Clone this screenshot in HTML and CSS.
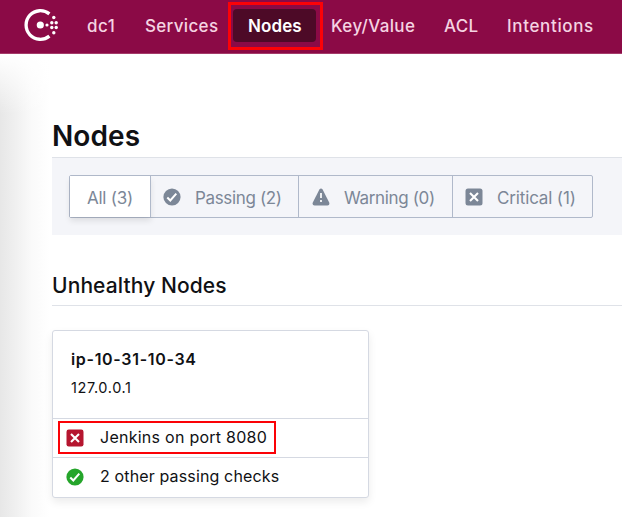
FILE: index.html
```
<!DOCTYPE html>
<html lang="en">
<head>
<meta charset="utf-8">
<title>Nodes</title>
<link rel="stylesheet" href="styles.css">
</head>
<body>
<header class="topbar">
  <svg class="logo" viewBox="0 0 36 36" fill="#fff">
    <path d="M25.4 5.9A14.3 14.3 0 1 0 25.4 28.1" fill="none" stroke="#fff" stroke-width="3.3"/>
    <circle cx="16.3" cy="17" r="3.6"/>
    <circle cx="23" cy="17" r="1.6"/>
    <circle cx="27.8" cy="14.7" r="1.7"/><circle cx="27.8" cy="19.5" r="1.7"/>
    <circle cx="32.2" cy="14.7" r="1.7"/><circle cx="32.2" cy="19.5" r="1.7"/>
    <circle cx="29.8" cy="9.5" r="1.7"/><circle cx="29.8" cy="24.8" r="1.7"/>
  </svg>
  <nav class="menu">
    <a class="link dc">dc1</a>
    <a class="link services">Services</a>
    <a class="link active">Nodes<span class="mark"></span></a>
    <a class="link kv">Key/Value</a>
    <a class="link acl">ACL</a>
    <a class="link intentions">Intentions</a>
  </nav>
</header>
<main class="page">
  <h1 class="title">Nodes</h1>
  <div class="toolbar">
    <div class="filters">
      <div class="filter all"><span>All (3)</span></div>
      <div class="filter passing">
        <svg class="icon" viewBox="0 0 18 18"><circle cx="9" cy="9" r="8.6" fill="#7c8797"/><path d="M4.3 9.5l3 3 6-6.8" fill="none" stroke="#fff" stroke-width="2"/></svg>
        <span>Passing (2)</span>
      </div>
      <div class="filter warning">
        <svg class="icon" viewBox="0 0 18 18"><path d="M7.4 1.5Q9 -.6 10.6 1.5L17.2 14.5Q18 17.2 15.5 17.4H2.5Q0 17.2 .8 14.5Z" fill="#7c8797"/><path d="M9 5v5M9 12v2" stroke="#fff" stroke-width="1.7"/></svg>
        <span>Warning (0)</span>
      </div>
      <div class="filter critical">
        <svg class="icon" viewBox="0 0 18 18"><rect x=".5" y=".5" width="17" height="17" rx="2.5" fill="#7c8797"/><path d="M5 5l8 8M13 5l-8 8" stroke="#fff" stroke-width="2.1"/></svg>
        <span>Critical (1)</span>
      </div>
    </div>
  </div>
  <h2 class="subtitle">Unhealthy Nodes</h2>
  <article class="card">
    <div class="head">
      <strong class="name">ip-10-31-10-34</strong>
      <span class="address">127.0.0.1</span>
    </div>
    <div class="check failing">
      <svg class="icon" viewBox="0 0 18 18"><rect x=".5" y=".5" width="17" height="17" rx="2.2" fill="#b5152f"/><path d="M5 5l8 8M13 5l-8 8" stroke="#fff" stroke-width="2.1"/></svg>
      <span class="label">Jenkins on port 8080</span>
      <span class="mark"></span>
    </div>
    <div class="check healthy">
      <svg class="icon" viewBox="0 0 18 18"><circle cx="9" cy="9" r="8.6" fill="#25a52b"/><path d="M4.3 9.5l3 3 6-6.8" fill="none" stroke="#fff" stroke-width="2"/></svg>
      <span class="label">2 other passing checks</span>
    </div>
  </article>
</main>
</body>
</html>
```
FILE: styles.css
```
* { box-sizing: border-box; }
body {
  margin: 0;
  height: 517px;
  overflow: hidden;
  background: #fff;
  font-family: Inter, "Liberation Sans", sans-serif;
  color: #101114;
}
.topbar {
  display: flex;
  align-items: flex-start;
  height: 54px;
  padding: 8px 0 0 24px;
  background: #8b0a46;
  border-bottom: 1px solid #a43b69;
}
.logo { width: 36px; height: 36px; flex: none; }
.menu { display: flex; margin: 1px 0 0 12px; }
.link {
  position: relative;
  flex: none;
  padding: 0 15px;
  height: 33px;
  font-size: 17px;
  line-height: 34px;
  font-weight: 500;
  letter-spacing: .5px;
  white-space: nowrap;
  color: #f5d3e2;
}
.dc { width: 58px; }
.services { width: 103px; letter-spacing: .32px; }
.active { width: 83px; background: #4d0a27; color: #fff; border-radius: 4px; font-weight: 600; letter-spacing: .1px; }
.kv { width: 113px; letter-spacing: .35px; }
.acl { width: 63px; letter-spacing: .3px; }
.intentions { letter-spacing: .65px; }
.mark { position: absolute; border: 2px solid #fb0207; }
.active .mark { inset: -7px -7px -8px -5px; border-width: 3px; }
.page {
  height: 463px;
  padding: 66px 0 0 52px;
  background:
    linear-gradient(#fff, #fff0 60px),
    linear-gradient(90deg, #e7e7e7, #f0f0f0 16px, #fafafa 32px, #fff 50px);
}
.title { margin: 0; height: 37px; font-size: 28px; line-height: 33px; font-weight: 600; letter-spacing: .1px; }
.toolbar { height: 78px; padding: 17px 0 0 17px; background: #f4f5f9; border-top: 1px solid #dfe2e8; }
.filters { display: flex; width: 524px; height: 43px; border: 1px solid #b0b9ca; border-radius: 2px; }
.filter {
  display: flex;
  align-items: center;
  padding: 2px 0 0 12px;
  border-right: 1px solid #b0b9ca;
  font-size: 17px;
  letter-spacing: -.35px;
  white-space: nowrap;
  color: #7c8797;
}
.filter:last-child { border-right: 0; }
.icon { width: 18px; height: 18px; flex: none; }
.filter .icon { margin: -2px 14px 0 0; }
.all { width: 81px; padding-left: 17px; letter-spacing: -.25px; background: #fff; box-shadow: 0 4px 6px #00000018; }
.passing { width: 148px; }
.warning { width: 154px; padding-left: 13px; }
.critical { width: 139px; letter-spacing: -.15px; }
.subtitle { margin: 33px 0 24px; height: 38px; border-bottom: 1px solid #dfe2e8; font-size: 21px; line-height: 35px; font-weight: 550; letter-spacing: .1px; }
.card { width: 317px; height: 168px; border: 1px solid #d5d9e2; border-radius: 3px; background: #fff; box-shadow: 0 4px 8px #00000014; }
.head { display: flex; flex-direction: column; height: 87px; padding: 17px 18px 0; }
.name { font-size: 16px; line-height: 22px; font-weight: 600; letter-spacing: .68px; }
.address { margin-top: 7px; font-size: 14.5px; line-height: 22px; letter-spacing: .6px; }
.check {
  position: relative;
  display: flex;
  align-items: center;
  height: 39px;
  padding-left: 13px;
  border-top: 1px solid #d5d9e2;
  font-size: 16px;
  letter-spacing: .26px;
  white-space: nowrap;
}
.label { padding-bottom: 2px; }
.healthy { letter-spacing: .14px; }
.check .icon { margin-right: 16px; }
.failing .mark { left: 5px; top: 2px; width: 218px; height: 33px; }
```
